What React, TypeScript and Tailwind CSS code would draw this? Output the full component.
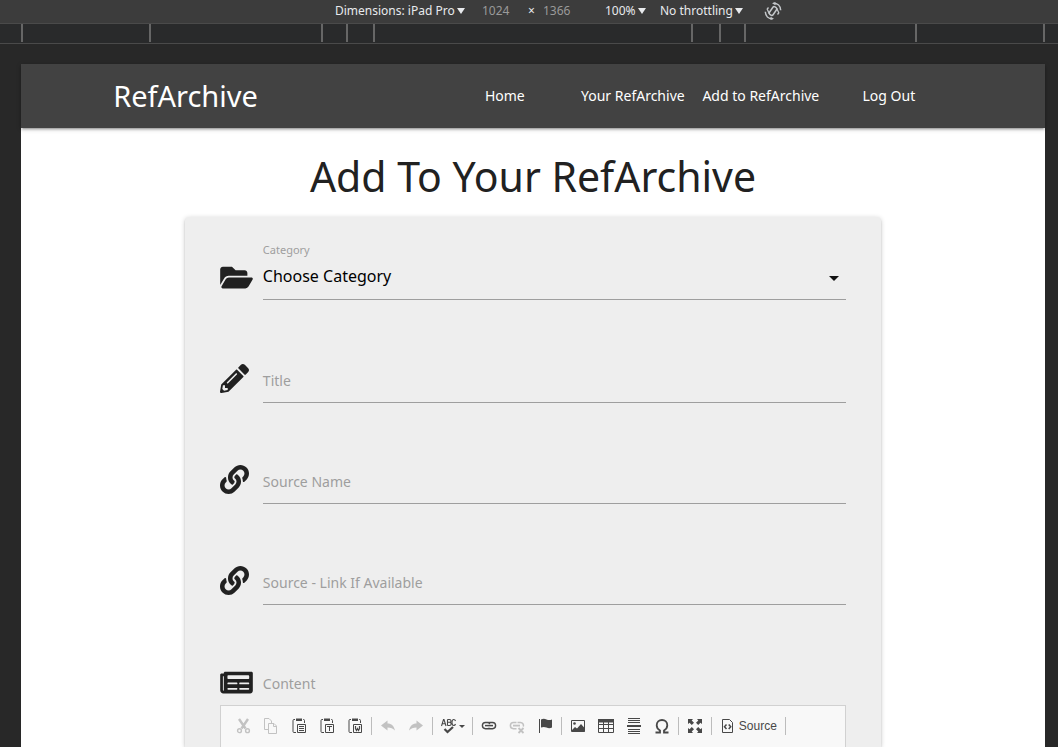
import React from "react";
import { FaFolderOpen, FaPencilAlt, FaLink, FaNewspaper } from "react-icons/fa";

function DeviceSelect({ label, value }: { label: string; value: string }) {
  return (
    <span className="flex items-center">
      <select aria-label={label} className="appearance-none bg-transparent text-[#e8eaed] outline-none">
        <option>{value}</option>
      </select>
      <svg width="10" height="6" viewBox="0 0 10 6" aria-hidden="true">
        <path d="M2 0h8L6 6z" fill="#e8eaed" />
      </svg>
    </span>
  );
}

function DeviceBar() {
  return (
    <div className="flex h-6 items-center border-b border-[#4a4a4a] bg-[#3c3c3c] pb-0.5 pl-[335px] text-xs text-[#e8eaed]">
      <div className="w-[147px]">
        <DeviceSelect label="Device" value="Dimensions: iPad Pro" />
      </div>
      <input aria-label="Width" defaultValue="1024" className="w-[46px] bg-transparent text-[#9a9a9a] outline-none" />
      <span className="w-[15px]">×</span>
      <input aria-label="Height" defaultValue="1366" className="w-[62px] bg-transparent text-[#9a9a9a] outline-none" />
      <div className="w-[55px]">
        <DeviceSelect label="Zoom" value="100%" />
      </div>
      <div className="w-[104px]">
        <DeviceSelect label="Throttling" value="No throttling" />
      </div>
      <button aria-label="Rotate" className="text-[#c4c7ca]">
        <svg width="18" height="18" viewBox="0 0 18 18" fill="none" stroke="currentColor" strokeWidth="1.500">
          <rect x="6.800" y="4.500" width="4.400" height="9" rx="1.500" transform="rotate(35 9 9)" />
          <path d="M4.500 5.500l-1.300 1.700 2 4.300M13.500 12.500l1.300-1.700-2-4.300" strokeWidth="1.300" />
          <path d="M9.500 1.200c4 0 7 2.800 7.200 7M8.500 16.800c-4 0-7-2.800-7.200-7" />
          <path d="M8 1.200L11.500 0v3.200zM10 16.800L6.500 18v-3.200z" fill="currentColor" stroke="none" />
        </svg>
      </button>
    </div>
  );
}

function Ruler() {
  const tick = "border-l-2 border-[#666666]";
  return (
    <div className="h-5 border-b border-[#4a4a4a] bg-[#292a2b] pr-[13px] pl-[21px]">
      <div className="grid h-[18px] grid-cols-[128fr_172fr_25fr_27fr_318fr_28fr_25fr_171fr_130fr]">
        <div className={tick} />
        <div className={tick} />
        <div className={tick} />
        <div className={tick} />
        <div className={tick} />
        <div className={tick} />
        <div className={tick} />
        <div className={tick} />
        <div className="border-x-2 border-[#666666]" />
      </div>
    </div>
  );
}

function Field({ id, label, icon }: { id: string; label: string; icon: React.ReactNode }) {
  return (
    <div className="flex h-[101px] items-start">
      <div className="flex h-[27px] w-[43px] shrink-0 items-center text-[29px]">{icon}</div>
      <div className="grid flex-1">
        <label htmlFor={id} className="pointer-events-none col-start-1 row-start-1 pt-1 text-sm leading-6 text-[#9e9e9e]">
          {label}
        </label>
        <input
          id={id}
          className="col-start-1 row-start-1 h-[38px] w-full border-b border-[#9e9e9e] bg-transparent text-base outline-none"
        />
      </div>
    </div>
  );
}

function Tool({ label, disabled, children }: { label: string; disabled?: boolean; children: React.ReactNode }) {
  return (
    <button
      type="button"
      aria-label={label}
      disabled={disabled}
      className="flex h-7 w-7 shrink-0 items-center justify-center text-[#484848] disabled:opacity-30"
    >
      <svg width="16" height="16" viewBox="0 0 16 16" fill="none" stroke="currentColor">
        {children}
      </svg>
    </button>
  );
}

function Separator() {
  return <span className="mx-0.5 h-[18px] w-px shrink-0 bg-[#bcbcbc]" />;
}

function Clipboard() {
  return (
    <>
      <path d="M5 0.500h6v2.500H5z" fill="currentColor" stroke="none" />
      <path d="M4 1.500H3A1 1 0 0 0 2 2.500v11a1 1 0 0 0 1 1h2M12 1.500h.5a1 1 0 0 1 1 1V5" />
      <path d="M6.500 6.500h8v8h-8z" />
    </>
  );
}

function EditorToolbar() {
  return (
    <div role="toolbar" aria-label="Editor toolbar" className="flex items-center pt-1.5 pl-2">
      <Tool label="Cut" disabled>
        <path d="M4 1l6.500 9.500M13 1l-6.500 9.500" strokeWidth="2.400" />
        <circle cx="4.500" cy="12.700" r="1.900" strokeWidth="1.400" />
        <circle cx="12.500" cy="12.700" r="1.900" strokeWidth="1.400" />
      </Tool>
      <Tool label="Copy" disabled>
        <path d="M5 11.500H1.500v-11H6L8.500 3v2" />
        <path d="M5.500 5.500H11L13.500 8v7.500h-8zM10.500 5.500v3h3" />
      </Tool>
      <Tool label="Paste">
        <Clipboard />
        <path d="M8 8.500h5M8 10.500h5M8 12.500h5" />
      </Tool>
      <Tool label="Paste as plain text">
        <Clipboard />
        <path d="M8 8.500h5M10.500 9v4" />
      </Tool>
      <Tool label="Paste from Word">
        <Clipboard />
        <path d="M8.500 8v2.500l1 2 1-2 1 2 1-2V8" strokeWidth="1.200" />
      </Tool>
      <Separator />
      <Tool label="Undo" disabled>
        <path d="M1 7.500L7.500 2.500v3c4 0 6.500 2.500 7.500 7-2-2-4-3-7.500-3v3z" fill="currentColor" stroke="none" />
      </Tool>
      <Tool label="Redo" disabled>
        <path d="M15 7.500L8.500 2.500v3c-4 0-6.500 2.500-7.500 7 2-2 4-3 7.500-3v3z" fill="currentColor" stroke="none" />
      </Tool>
      <Separator />
      <button
        type="button"
        aria-label="Spell check as you type"
        className="flex h-7 w-[35px] shrink-0 items-center gap-0.5 pl-1.5 text-[#484848]"
      >
        <svg width="16" height="16" viewBox="0 0 16 16" fill="none" stroke="currentColor">
          <path
            d="M.5 8L2.500 1.500h.5L5 8M1.200 5.800h3M6.500 1.500v6M6.500 1.500h2c2 0 2 2.800 0 2.800h-2M8.500 4.300c2.200 0 2.200 3.200 0 3.200h-2M14.500 3c-.3-1-1-1.500-1.800-1.500C11.500 1.500 11 2.500 11 4.500s.5 3 1.700 3c.8 0 1.500-.5 1.800-1.500"
            strokeWidth="1.100"
          />
          <path d="M3.500 11l3 3L12 9" strokeWidth="2.200" />
        </svg>
        <svg width="6" height="3" viewBox="0 0 6 3">
          <path d="M0 0h6L3 3z" fill="currentColor" />
        </svg>
      </button>
      <Separator />
      <Tool label="Link">
        <path d="M8.500 6.200V5.500a1 1 0 0 0-1-1h-3a3 3 0 0 0 0 6.200h3a1 1 0 0 0 1-1M7.500 5.500a1 1 0 0 1 1-1h3a3 3 0 0 1 0 6.200h-3a1 1 0 0 1-1-1" strokeWidth="1.400" />
        <path d="M4 7.600h8" strokeWidth="1.500" />
      </Tool>
      <Tool label="Unlink" disabled>
        <path d="M7.500 4.500h-3a3 3 0 0 0 0 6.200h3M8.500 4.500h3a3 3 0 0 1 2.800 4" strokeWidth="1.500" />
        <path d="M4 7.600h7" strokeWidth="1.800" />
        <path d="M9.500 10l5 5M14.500 10l-5 5" strokeWidth="1.800" />
      </Tool>
      <Tool label="Anchor">
        <path d="M2.500 1v14" />
        <path d="M4 1.500c2-1 3.500-1 5.500 0 2 .8 3.500.8 5.500 0v8c-2 1-3.500 1-5.500 0-2-.8-3.500-.8-5.500 0z" fill="currentColor" stroke="none" />
      </Tool>
      <Separator />
      <Tool label="Image">
        <path d="M1.500 2.500h13v11h-13z" />
        <circle cx="4.500" cy="5.500" r="1.300" fill="currentColor" stroke="none" />
        <path d="M2 12l3-3 2 1.500L11 6l4 4.500v3H2z" fill="currentColor" stroke="none" />
      </Tool>
      <Tool label="Table">
        <path d="M.5 1.500h15v13H.5zM.5 6.500h15M.5 10.500h15M5.500 4v10M10.500 4v10" />
        <path d="M0 1h16v3.500H0z" fill="currentColor" stroke="none" />
      </Tool>
      <Tool label="Horizontal line">
        <path d="M2 .5h12M2 2.500h12M2 4.500h12M2 11.500h12M2 13.500h12M2 15.500h12" />
        <path d="M1 8h14" strokeWidth="2" />
      </Tool>
      <Tool label="Special character">
        <path d="M1.500 14.500h4.500v-2C3.800 11.200 2.700 9.500 2.700 7.200 2.700 4 5 2 8 2s5.300 2 5.300 5.200c0 2.300-1.100 4-3.300 5.300v2h4.500" strokeWidth="1.800" />
      </Tool>
      <Separator />
      <Tool label="Maximize">
        <path d="M1 1h5L4.700 2.500 7 4.800 4.800 7 2.500 4.700 1 6zM15 1v5l-1.500-1.300L11.200 7 9 4.800l2.300-2.300L10 1zM1 15v-5l1.500 1.300L4.800 9 7 11.200l-2.300 2.300L6 15zM15 15h-5l1.300-1.500L9 11.200 11.200 9l2.300 2.300L15 10z" fill="currentColor" stroke="none" />
      </Tool>
      <Separator />
      <button
        type="button"
        className="flex h-7 w-[69px] shrink-0 items-center gap-1 pl-1.5 font-['Liberation_Sans',sans-serif] text-xs text-[#484848]"
      >
        <svg width="15" height="16" viewBox="0 0 15 16" fill="none" stroke="currentColor">
          <path d="M2.500 1.500H9.500L12.500 4.500v10h-10z" />
          <path d="M6.500 6.500L4.500 8.700l2 2.200M8.700 6.500l2 2.200-2 2.200" strokeWidth="1.500" />
        </svg>
        Source
      </button>
      <Separator />
    </div>
  );
}

export default function App() {
  return (
    <div className="flex min-h-screen flex-col bg-[#282828] font-['Noto_Sans',sans-serif]">
      <DeviceBar />
      <Ruler />
      <div className="flex flex-1 flex-col pt-5 pr-[13px] pl-[21px]">
        <div className="flex flex-1 flex-col bg-white text-[#212121]">
          <header className="flex h-16 items-center justify-between bg-[#424242] px-[9%] text-white shadow-[0_2px_2px_0_rgba(0,0,0,0.14),0_3px_1px_-2px_rgba(0,0,0,0.12),0_1px_5px_0_rgba(0,0,0,0.2)]">
            <a href="#" className="text-[29px] leading-9">
              RefArchive
            </a>
            <nav className="grid w-[512px] grid-cols-4 text-center text-sm whitespace-nowrap">
              <a href="#home">Home</a>
              <a href="#archive">Your RefArchive</a>
              <a href="#add">Add to RefArchive</a>
              <a href="#logout">Log Out</a>
            </nav>
          </header>
          <h1 className="pt-5 pb-[13px] text-center text-[41px] leading-14">Add To Your RefArchive</h1>
          <form className="mx-auto flex w-[68%] flex-1 flex-col rounded-t-sm bg-[#eeeeee] px-[35px] pt-[23px] shadow-[0_2px_2px_0_rgba(0,0,0,0.14),0_3px_1px_-2px_rgba(0,0,0,0.12),0_1px_5px_0_rgba(0,0,0,0.2)]">
            <div className="flex h-[125px] items-start">
              <div className="flex h-[74px] w-[43px] shrink-0 items-center">
                <FaFolderOpen className="h-[29px] w-[33px]" />
              </div>
              <div className="flex-1">
                <label htmlFor="category" className="block text-[11px] leading-5 text-[#9e9e9e]">
                  Category
                </label>
                <div className="grid items-center">
                  <select
                    id="category"
                    className="col-start-1 row-start-1 h-10 w-full appearance-none border-b border-[#9e9e9e] bg-transparent pb-2 text-base text-black outline-none"
                  >
                    <option>Choose Category</option>
                  </select>
                  <svg className="pointer-events-none col-start-1 row-start-1 mr-[7px] mb-1 justify-self-end" width="10" height="5" viewBox="0 0 10 5">
                    <path d="M0 0h10L5 5z" fill="#111111" />
                  </svg>
                </div>
              </div>
            </div>
            <Field id="title" label="Title" icon={<FaPencilAlt />} />
            <Field id="source-name" label="Source Name" icon={<FaLink />} />
            <Field id="source-link" label="Source - Link If Available" icon={<FaLink />} />
            <div className="flex h-[37px] items-start">
              <div className="flex h-[29px] w-[43px] shrink-0 items-center">
                <FaNewspaper className="h-[29px] w-[33px]" />
              </div>
              <span className="pt-1 text-sm leading-6 text-[#9e9e9e]">Content</span>
            </div>
            <div className="flex-1 border border-b-0 border-[#d1d1d1] bg-[#f8f8f8]">
              <EditorToolbar />
            </div>
          </form>
        </div>
      </div>
    </div>
  );
}
